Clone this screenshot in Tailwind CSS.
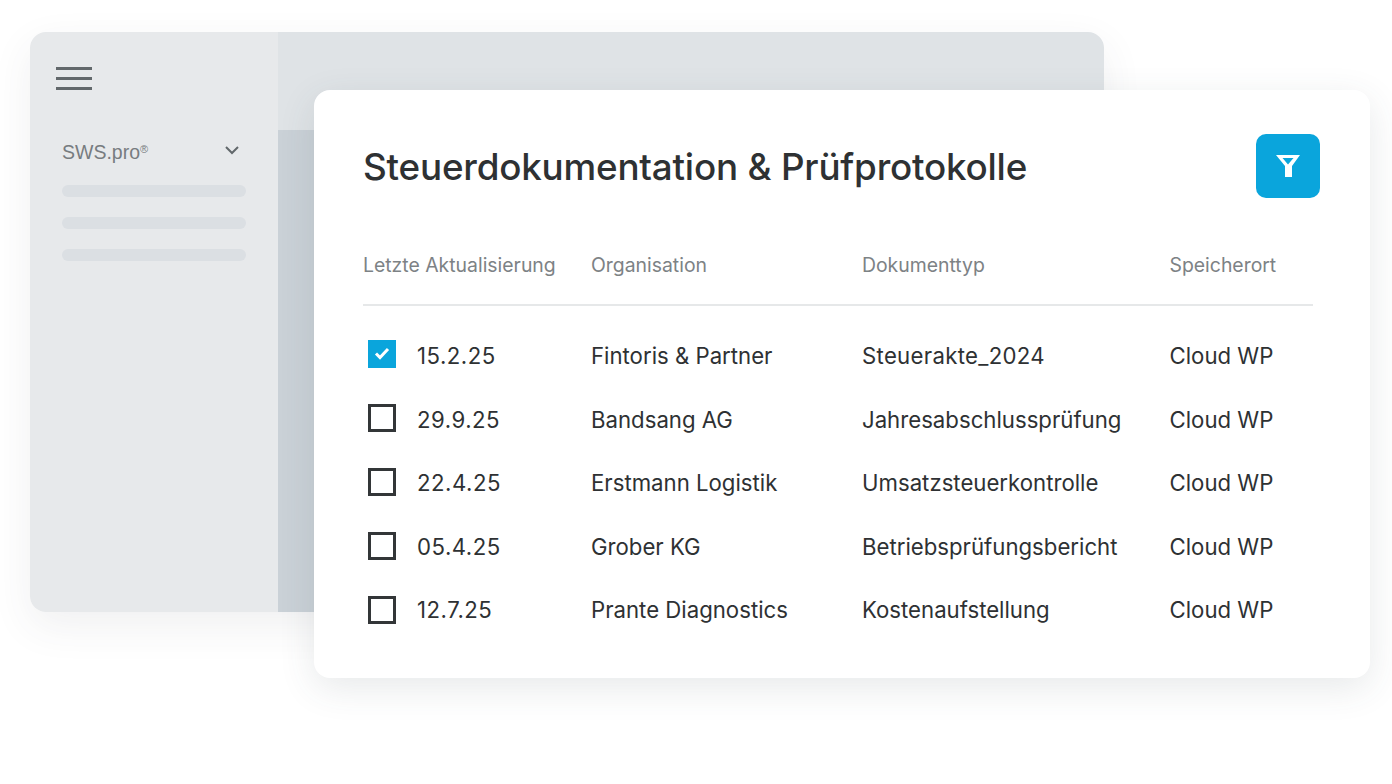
<!DOCTYPE html>
<html lang="de">
<head>
    <meta charset="UTF-8">
    <title>Steuerdokumentation</title>
    <script src="https://cdn.jsdelivr.net/npm/@tailwindcss/browser@4"></script>
</head>
<body class="bg-white w-[1392px] h-[784px] overflow-hidden relative font-['Inter',sans-serif] text-[#2e3133]">
    <!-- back window -->
    <div class="absolute left-[30px] top-[32px] w-[1074px] h-[580px] rounded-[16px] overflow-hidden flex shadow-[0_14px_40px_rgba(60,70,80,0.08)]">
        <aside class="w-[248px] bg-[#e7e9eb] pl-[26px] pt-[35px] shrink-0">
            <div class="w-[36px] flex flex-col gap-[7px]">
                <div class="h-[3px] bg-[#62686b]"></div>
                <div class="h-[3px] bg-[#62686b]"></div>
                <div class="h-[3px] bg-[#62686b]"></div>
            </div>
            <div class="mt-[50px] pl-[6px] w-[183px] flex items-center justify-between">
                <span class="text-[19.5px] leading-[24px] text-[#777c80] font-['Liberation_Sans',sans-serif]">SWS.pro<sup class="text-[11px] align-[6px] leading-none top-0">®</sup></span>
                <svg class="w-[14px] h-[9px] mb-[3px]" viewBox="0 0 14 9" fill="none" stroke="#62686b" stroke-width="2"><path d="M1 1l6 6 6-6"/></svg>
            </div>
            <div class="mt-[21px] ml-[6px] w-[184px] flex flex-col gap-[20px]">
                <div class="h-[12px] rounded-full bg-[#dbdfe3]"></div>
                <div class="h-[12px] rounded-full bg-[#dbdfe3]"></div>
                <div class="h-[12px] rounded-full bg-[#dbdfe3]"></div>
            </div>
        </aside>
        <div class="flex-1 flex flex-col">
            <div class="h-[98px] bg-[#dfe3e6]"></div>
            <div class="flex-1 bg-[#cad1d7]"></div>
        </div>
    </div>

    <!-- front card -->
    <div class="absolute left-[314px] top-[90px] w-[1056px] h-[588px] rounded-[16px] bg-white pl-[49px] pr-[57px] shadow-[0_10px_36px_rgba(60,70,80,0.12)]">
        <div class="flex items-center justify-between h-[64px] mt-[44px] mr-[-7px]">
            <h1 class="text-[36.8px] leading-[44px] font-[450] tracking-[-0.2px] text-[#2e3133] mt-[1px]">Steuerdokumentation &amp; Prüfprotokolle</h1>
            <button class="w-[64px] h-[64px] rounded-[10px] bg-[#0aa5dc] flex items-center justify-center">
                <svg class="w-[24px] h-[22px]" viewBox="0 0 24 22" fill="#fff" fill-rule="evenodd"><path d="M0 0H24L16 11V22H9V11Z M6.500 3H17.500L12 9.500Z"/></svg>
            </button>
        </div>

        <div class="grid grid-cols-[228px_271px_307.5px_1fr] h-[108px] pt-[55px] border-b-2 border-[#e6e8e9] text-[19.400px] leading-[24px] text-[#7d8285]">
            <div>Letzte Aktualisierung</div>
            <div>Organisation</div>
            <div>Dokumenttyp</div>
            <div>Speicherort</div>
        </div>

        <div class="mt-[18px] text-[22.200px] leading-[63.500px]">
            <div class="grid grid-cols-[228px_271px_307.5px_1fr] h-[63.500px]">
                <div class="flex items-center pl-[5px] gap-[21px]">
                    <span class="w-[28px] h-[28px] mb-[4px] bg-[#0aa5dc] flex items-center justify-center">
                        <svg class="w-[16px] h-[13px]" viewBox="0 0 16 13" fill="none" stroke="#fff" stroke-width="3"><path d="M2 6.500l4 4 8-8.500"/></svg>
                    </span>
                    <span class="tracking-[0.5px]">15.2.25</span>
                </div>
                <div>Fintoris &amp; Partner</div>
                <div class="tracking-[0.3px]">Steuerakte_2024</div>
                <div>Cloud WP</div>
            </div>
            <div class="grid grid-cols-[228px_271px_307.5px_1fr] h-[63.500px]">
                <div class="flex items-center pl-[5px] gap-[21px]">
                    <span class="w-[28px] h-[28px] mb-[2px] border-[3px] border-[#333638]"></span>
                    <span class="tracking-[0.5px]">29.9.25</span>
                </div>
                <div>Bandsang AG</div>
                <div>Jahresabschlussprüfung</div>
                <div>Cloud WP</div>
            </div>
            <div class="grid grid-cols-[228px_271px_307.5px_1fr] h-[63.500px]">
                <div class="flex items-center pl-[5px] gap-[21px]">
                    <span class="w-[28px] h-[28px] mb-[2px] border-[3px] border-[#333638]"></span>
                    <span class="tracking-[0.5px]">22.4.25</span>
                </div>
                <div>Erstmann Logistik</div>
                <div>Umsatzsteuerkontrolle</div>
                <div>Cloud WP</div>
            </div>
            <div class="grid grid-cols-[228px_271px_307.5px_1fr] h-[63.500px]">
                <div class="flex items-center pl-[5px] gap-[21px]">
                    <span class="w-[28px] h-[28px] border-[3px] border-[#333638]"></span>
                    <span class="tracking-[0.5px]">05.4.25</span>
                </div>
                <div>Grober KG</div>
                <div>Betriebsprüfungsbericht</div>
                <div>Cloud WP</div>
            </div>
            <div class="grid grid-cols-[228px_271px_307.5px_1fr] h-[63.500px]">
                <div class="flex items-center pl-[5px] gap-[21px]">
                    <span class="w-[28px] h-[28px] border-[3px] border-[#333638]"></span>
                    <span class="tracking-[0.5px]">12.7.25</span>
                </div>
                <div>Prante Diagnostics</div>
                <div>Kostenaufstellung</div>
                <div>Cloud WP</div>
            </div>
        </div>
    </div>
</body>
</html>
